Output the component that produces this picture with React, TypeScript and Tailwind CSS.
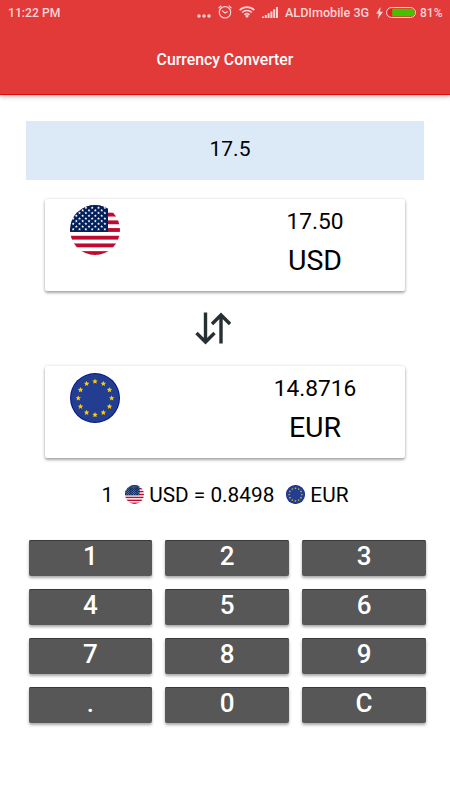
import React, { useState } from 'react';

const KEYS = ['1', '2', '3', '4', '5', '6', '7', '8', '9', '.', '0', 'C'];
const RATE = 0.849806;

const starPoints = (cx: number, cy: number, r: number) =>
   Array.from({ length: 10 }, (_, i) => {
      const radius = i % 2 === 0 ? r : r * 0.45;
      const angle = (Math.PI / 5) * i - Math.PI / 2;
      return `${(cx + radius * Math.cos(angle)).toFixed(2)},${(cy + radius * Math.sin(angle)).toFixed(2)}`;
   }).join(' ');

const UsFlag: React.FC<{ className: string; id: string }> = ({ className, id }) => (
   <svg viewBox="0 0 50 50" className={className}>
      <clipPath id={id}>
         <circle cx="25" cy="25" r="25" />
      </clipPath>
      <g clipPath={`url(#${id})`}>
         <rect width="50" height="50" fill="#fff" />
         {[0, 2, 4, 6, 8, 10, 12].map(i => (
            <rect key={i} y={i * 3.846} width="50" height="3.846" fill="#bf0a30" />
         ))}
         <rect width="38" height="26.92" fill="#00205b" />
         {Array.from({ length: 9 }, (_, row) =>
            Array.from({ length: row % 2 === 0 ? 6 : 5 }, (_, col) => (
               <polygon
                  key={`${row}-${col}`}
                  points={starPoints(3.17 * (col * 2 + 1 + (row % 2)), 2.69 * (row + 1), 1.55)}
                  fill="#fff"
               />
            ))
         )}
      </g>
   </svg>
);

const EuFlag: React.FC<{ className: string }> = ({ className }) => (
   <svg viewBox="0 0 50 50" className={className}>
      <circle cx="25" cy="25" r="25" fill="#001489" />
      <circle cx="25" cy="25" r="24" fill="#233e90" />
      {Array.from({ length: 12 }, (_, i) => (
         <polygon
            key={i}
            points={starPoints(25 + 16.7 * Math.sin((Math.PI / 6) * i), 25.2 - 16.7 * Math.cos((Math.PI / 6) * i), 2.9)}
            fill="#ffcc00"
         />
      ))}
   </svg>
);

const StatusBar: React.FC = () => (
   <div className="flex h-[26px] items-center pl-2 pr-2 text-[12.2px] font-medium text-[#fbd5d5]">
      <span>11:22 PM</span>
      <div className="ml-auto flex items-center">
         <svg className="mt-[6px] h-1 w-[14px]" viewBox="0 0 14 4" fill="currentColor">
            <circle cx="2" cy="2" r="1.75" />
            <circle cx="7" cy="2" r="1.75" />
            <circle cx="12" cy="2" r="1.75" />
         </svg>
         <svg className="mb-[2px] ml-[7px] h-[14px] w-[14px]" viewBox="0 0 14 14" fill="none" stroke="currentColor" strokeWidth="1.2">
            <circle cx="7" cy="7.3" r="5.7" />
            <path d="M4.2 5.6 7 8l2.8-1.6M.6 3.2 3.2.8M13.4 3.2 10.8.8" />
         </svg>
         <svg className="mb-[2px] ml-[7px] h-3 w-4" viewBox="0 0 16 12" fill="none" stroke="currentColor" strokeWidth="1.7">
            <path d="M.7 4.1a10.4 10.4 0 0 1 14.6 0M3.1 6.5a7 7 0 0 1 9.8 0M5.5 8.8a3.6 3.6 0 0 1 5 0" />
            <path d="M8 12 6.1 9.9a2.8 2.8 0 0 1 3.8 0z" fill="currentColor" stroke="none" />
         </svg>
         <svg className="ml-[7px] h-[11px] w-4" viewBox="0 0 16 11" fill="currentColor">
            <path d="M0 9.5h2V11H0zM2.8 8h2v3h-2zM5.6 6.3h2V11h-2zM8.4 4.4h2V11h-2zM11.2 2.3h2V11h-2zM14 0h2v11h-2z" />
         </svg>
         <span className="ml-[7px] w-[84px] whitespace-nowrap text-[12.6px]">ALDImobile 3G</span>
         <svg className="ml-[7px] h-3 w-[7px]" viewBox="0 0 7 12" fill="currentColor">
            <path d="M4.6 0 0 6.8h2.8L1.8 12 7 4.8H4z" />
         </svg>
         <svg className="ml-[3px] h-[11px] w-[30px]" viewBox="0 0 30 11">
            <rect x=".5" y=".5" width="29" height="10" rx="5" fill="none" stroke="#fbd5d5" />
            <path d="M6 2H5.5a3.5 3.5 0 0 0 0 7H6z" fill="#ee1c1c" />
            <path d="M6.3 1.7H25a3.8 3.8 0 0 1 0 7.6H6.3z" fill="#45c100" />
         </svg>
         <span className="ml-[4px] w-[22px] text-[12px]">81%</span>
      </div>
   </div>
);

interface CurrencyCardProps {
   flag: React.ReactNode;
   amount: string;
   code: string;
}

const CurrencyCard: React.FC<CurrencyCardProps> = ({ flag, amount, code }) => (
   <div className="mx-[45px] flex h-[92px] rounded-[2px] bg-white pl-[25px] pt-[6px] shadow-[0_2px_3px_rgba(0,0,0,0.32),0_0_3px_rgba(0,0,0,0.14)]">
      {flag}
      <div className="ml-[105px] w-[180px] pt-px text-center">
         <p className="text-[22.7px] leading-[32px]">{amount}</p>
         <p className="mt-[3px] text-[28.5px] leading-[40px]">{code}</p>
      </div>
   </div>
);

const App: React.FC = () => {
   const [input, setInput] = useState('17.5');
   const amount = Number(input) || 0;

   const handleKey = (key: string) => {
      if (key === 'C') return setInput('0');
      if (key === '.' && input.includes('.')) return;
      setInput(input === '0' && key !== '.' ? key : input + key);
   };

   return (
      <div className="h-[800px] w-[450px] overflow-hidden bg-white font-[Roboto,sans-serif] text-black">
         <header className="h-[95px] border-b border-[#e00b0b] bg-[#e23a39] shadow-[0_2px_4px_rgba(0,0,0,0.25)]">
            <StatusBar />
            <h1 className="pt-[22px] text-center text-[15.8px] font-medium leading-6 text-white">Currency Converter</h1>
         </header>

         <main className="pt-[26px]">
            <div className="mx-[26px] mb-[19px] flex h-[59px] items-center justify-center bg-[#dceaf8] pb-px pl-[10px] text-[21px]">
               {input}
            </div>

            <CurrencyCard flag={<UsFlag id="us-large" className="h-[50px] w-[50px]" />} amount={amount.toFixed(2)} code="USD" />

            <div className="flex h-[75px] items-center justify-center">
               <svg className="mr-[25px] h-[33px] w-[36px]" viewBox="0 0 36 33" fill="none" stroke="#263033" strokeWidth="3.4">
                  <path d="M10.5 .5v29.3M1.5 21l9 9 9-9M26 31.5V3M17 12l9-9 9 9" />
               </svg>
            </div>

            <CurrencyCard flag={<EuFlag className="mt-[0.5px] h-[50px] w-[50px]" />} amount={(amount * RATE).toFixed(4)} code="EUR" />

            <div className="mt-[24px] flex h-[28px] items-center justify-center text-[20.8px]">
               <span>1</span>
               <UsFlag id="us-small" className="mb-[3px] ml-[12px] mr-[5px] h-[19px] w-[19px]" />
               <span>USD = {RATE.toFixed(4)}</span>
               <EuFlag className="mb-[3px] ml-[12px] mr-[5px] h-[19px] w-[19px]" />
               <span>EUR</span>
            </div>

            <div className="ml-[28.5px] mr-[24px] mt-[30px] grid grid-cols-3 gap-x-[13px] gap-y-[13px]">
               {KEYS.map(key => (
                  <button
                     key={key}
                     onClick={() => handleKey(key)}
                     className="h-9 rounded-[2px] bg-[#575757] pb-[4px] text-[26px] font-medium leading-8 text-white shadow-[0_2px_3px_rgba(0,0,0,0.35),inset_0_1px_0_#393939]"
                  >
                     {key}
                  </button>
               ))}
            </div>
         </main>
      </div>
   );
};

export default App;
